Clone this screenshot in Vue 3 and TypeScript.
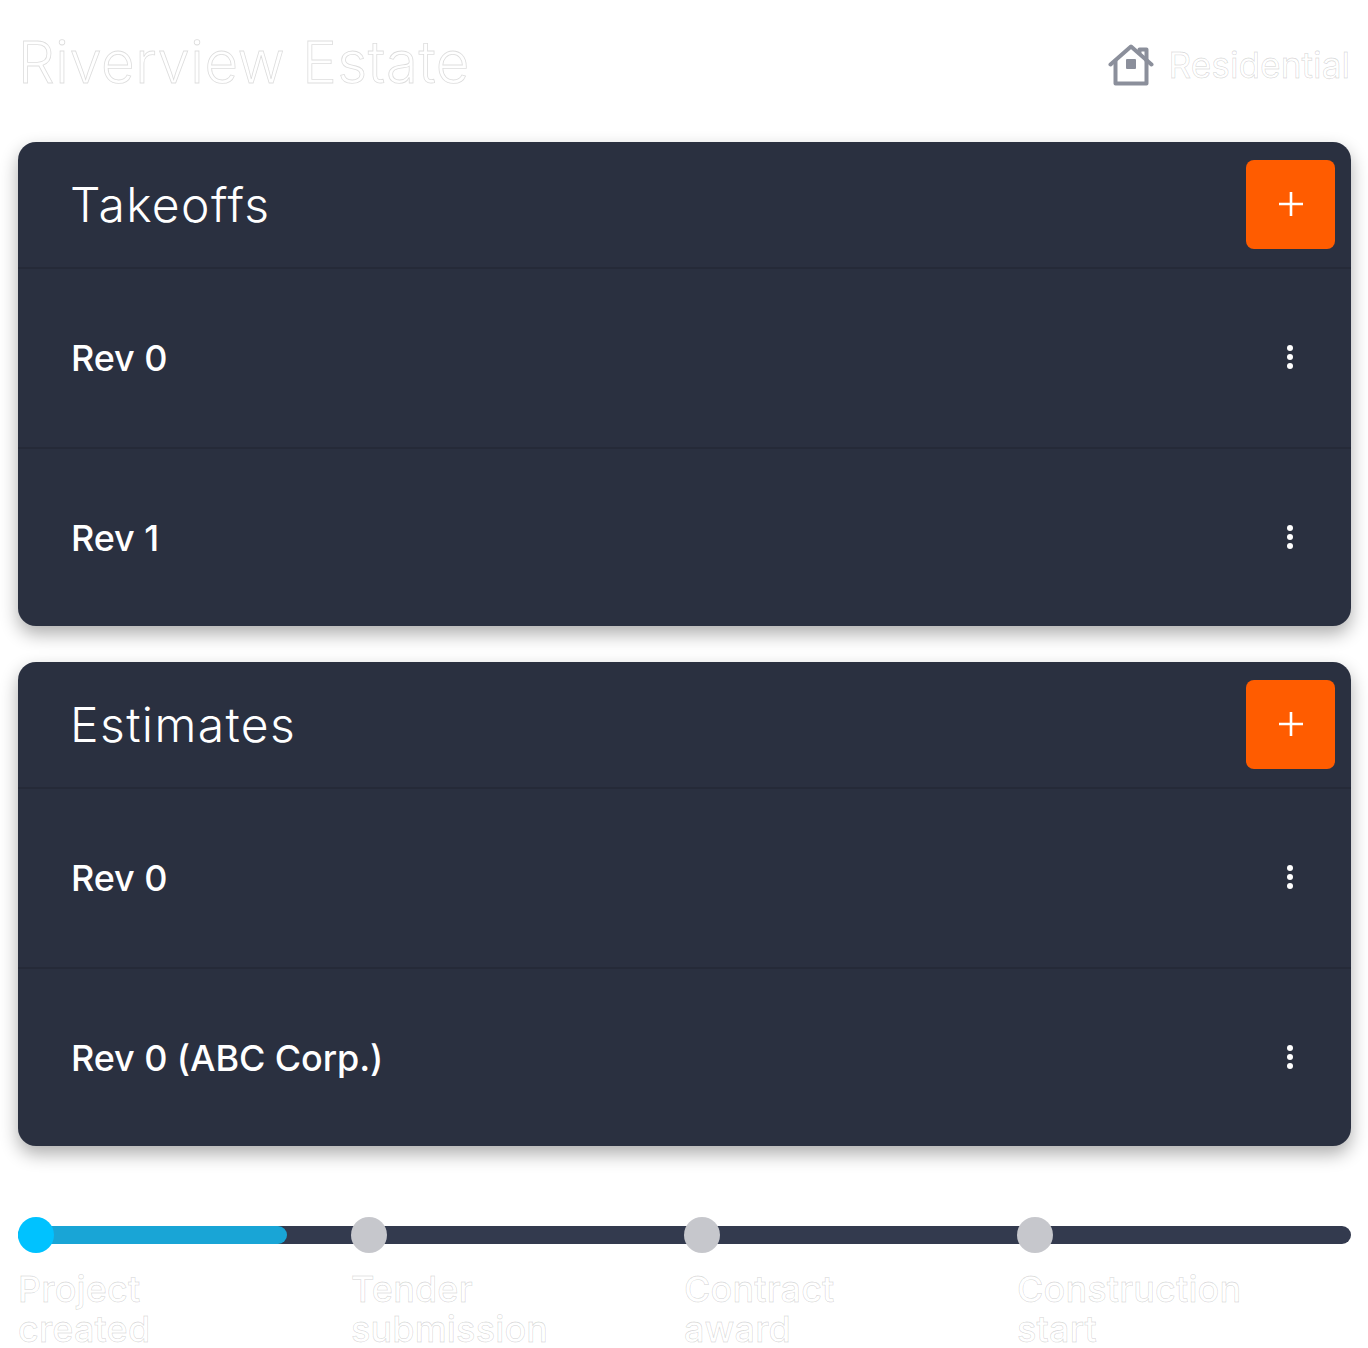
<script setup lang="ts">
interface Section {
  title: string;
  revisions: string[];
}

const sections: Section[] = [
  { title: 'Takeoffs', revisions: ['Rev 0', 'Rev 1'] },
  { title: 'Estimates', revisions: ['Rev 0', 'Rev 0 (ABC Corp.)'] },
];

const milestones = [
  { lines: ['Project', 'created'], active: true },
  { lines: ['Tender', 'submission'], active: false },
  { lines: ['Contract', 'award'], active: false },
  { lines: ['Construction', 'start'], active: false },
];
</script>

<template>
  <div class="page">
    <header class="top">
      <h1 class="ghost">Riverview Estate</h1>
      <div class="kind">
        <svg class="house" viewBox="0 0 46 42" fill="none" stroke="#8b8f9b" stroke-width="4" stroke-linecap="round" stroke-linejoin="round">
          <path d="M2.5 20.5 23 2.5l20.5 18" />
          <path d="M7.5 17v22.5h31V17" />
          <path d="M31.5 8.5V5.5h7v11" />
          <rect x="18" y="15" width="10" height="10" rx="1" fill="#8b8f9b" stroke="none" />
        </svg>
        <span class="ghost kind-label">Residential</span>
      </div>
    </header>

    <section v-for="section in sections" :key="section.title" class="card">
      <div class="card-head">
        <h2>{{ section.title }}</h2>
        <button class="add" type="button" aria-label="Add">
          <svg viewBox="0 0 24 24" width="24" height="24" stroke="#fff" stroke-width="2.6">
            <path d="M12 0v24M0 12h24" />
          </svg>
        </button>
      </div>
      <div v-for="rev in section.revisions" :key="rev" class="row">
        <span>{{ rev }}</span>
        <div class="more"><i></i><i></i><i></i></div>
      </div>
    </section>

    <div class="timeline">
      <div class="track"><div class="fill"></div></div>
      <div v-for="m in milestones" :key="m.lines[0]" class="step">
        <div class="dot" :class="{ active: m.active }"></div>
        <div class="ghost step-label">
          <div v-for="line in m.lines" :key="line">{{ line }}</div>
        </div>
      </div>
    </div>
  </div>
</template>

<style>
html,
body {
  background: #fff;
}
</style>

<style scoped>
.page {
  width: 1368px;
  height: 1348px;
  box-sizing: border-box;
  padding: 0 17px 0 18px;
  overflow: hidden;
  font-family: Inter, "Liberation Sans", sans-serif;
}

/* white on white, only the glyph edges show */
.ghost {
  color: #fff;
  -webkit-text-stroke: 0.8px rgba(40, 40, 40, 0.16);
}

.top {
  height: 142px;
  display: flex;
  justify-content: space-between;
  align-items: flex-start;
}

h1 {
  margin: 27px 0 0 0;
  font-size: 58px;
  line-height: 70px;
  font-weight: 300;
  letter-spacing: 0.55px;
}

.kind {
  display: flex;
  align-items: center;
  gap: 15px;
  margin: 45px 1px 0 0;
}

.house {
  width: 46px;
  height: 42px;
  margin-top: -2px;
}

.kind-label {
  font-size: 35.3px;
  line-height: 42px;
  font-weight: 400;
}

.card {
  background: #2a3040;
  border-radius: 18px;
  margin-bottom: 36px;
  box-shadow: 0 8px 18px rgba(0, 0, 0, 0.32);
  color: #fff;
}

.card-head {
  height: 127px;
  box-sizing: border-box;
  padding: 18px 16px 0 52px;
  display: flex;
  justify-content: space-between;
  align-items: flex-start;
  border-bottom: 2px solid #252a38;
}

h2 {
  margin: 0;
  font-size: 48px;
  line-height: 89px;
  font-weight: 300;
  letter-spacing: 1.4px;
}

.add {
  width: 89px;
  height: 89px;
  padding: 0 0 2px;
  border: none;
  border-radius: 8px;
  background: #ff5c00;
  display: flex;
  align-items: center;
  justify-content: center;
}

.row {
  height: 180px;
  box-sizing: border-box;
  padding: 0 55px 0 53px;
  display: flex;
  justify-content: space-between;
  align-items: center;
  font-size: 36px;
  font-weight: 500;
  letter-spacing: -0.1px;
  border-bottom: 2px solid #252a38;
}

.row:last-child {
  border-bottom: none;
  height: 177px;
}

.more {
  width: 12px;
  margin-top: -2px;
  display: flex;
  flex-direction: column;
  gap: 3px;
  align-items: center;
}

.more i {
  width: 6px;
  height: 6px;
  border-radius: 50%;
  background: #fff;
}

.timeline {
  position: relative;
  margin-top: 71px;
  display: grid;
  grid-template-columns: repeat(4, 333px);
}

.track {
  position: absolute;
  left: 0;
  right: 0;
  top: 9px;
  height: 18px;
  border-radius: 9px;
  background: #333a4e;
}

.fill {
  width: 269px;
  height: 18px;
  border-radius: 9px;
  background: #19a5d6;
}

.step {
  position: relative;
}

.dot {
  width: 36px;
  height: 36px;
  border-radius: 50%;
  background: #c6c7cc;
}

.dot.active {
  background: #00c2ff;
}

.step-label {
  margin-top: 16px;
  font-size: 36px;
  line-height: 40px;
  font-weight: 500;
  letter-spacing: 0.15px;
}
</style>
